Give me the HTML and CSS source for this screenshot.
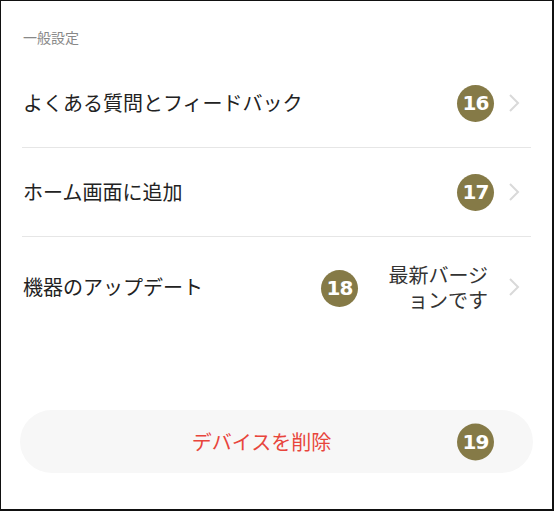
FILE: index.html
```html
<!DOCTYPE html>
<html lang="ja">
<head>
<meta charset="utf-8">
<link rel="stylesheet" href="styles.css">
</head>
<body>
<div class="frame">
  <div class="section-title">一般設定</div>
  <div class="list">
    <div class="row">
      <span class="label">よくある質問とフィードバック</span>
      <span class="badge">16</span>
      <svg class="chev" viewBox="0 0 12 20"><path d="M2 2 L10 10 L2 18" fill="none" stroke="#d9d9d9" stroke-width="2"/></svg>
    </div>
    <div class="row">
      <span class="label">ホーム画面に追加</span>
      <span class="badge">17</span>
      <svg class="chev" viewBox="0 0 12 20"><path d="M2 2 L10 10 L2 18" fill="none" stroke="#d9d9d9" stroke-width="2"/></svg>
    </div>
    <div class="row">
      <span class="label">機器のアップデート</span>
      <span class="badge badge-mid">18</span>
      <span class="value">最新バージョンです</span>
      <svg class="chev" viewBox="0 0 12 20"><path d="M2 2 L10 10 L2 18" fill="none" stroke="#d9d9d9" stroke-width="2"/></svg>
    </div>
  </div>
  <div class="danger">
    <span class="danger-text">デバイスを削除</span>
    <span class="badge badge-abs">19</span>
  </div>
</div>
</body>
</html>
```
FILE: styles.css
```css
html, body {
  margin: 0;
  padding: 0;
  background: #fff;
}
.frame {
  box-sizing: border-box;
  width: 554px;
  height: 511px;
  border-style: solid;
  border-color: #111;
  border-width: 1px 2px 2px 1px;
  padding: 26px 21px 0 21px;
  font-family: "Noto Sans CJK JP", "Noto Sans", sans-serif;
  color: #222;
}
.section-title {
  font-size: 14px;
  line-height: 20px;
  color: #888;
  margin-left: 1px;
  margin-bottom: 12px;
}
.row {
  display: flex;
  align-items: center;
  min-height: 89px;
  box-sizing: border-box;
  border-bottom: 1px solid #e6e6e6;
  padding: 0 0 0 1px;
}
.row:last-child {
  border-bottom: none;
  min-height: 100px;
}
.label {
  flex: 1;
  font-size: 20px;
  line-height: 28px;
  color: #222;
}
.badge {
  display: inline-flex;
  align-items: center;
  justify-content: center;
  width: 37px;
  height: 37px;
  border-radius: 50%;
  background: #857a47;
  color: #fff;
  font-family: "DejaVu Sans", sans-serif;
  font-weight: bold;
  font-size: 20px;
  letter-spacing: -1px;
}
.badge-mid {
  margin-right: 20px;
  margin-top: 2px;
}
.value {
  width: 110px;
  text-align: right;
  font-size: 20px;
  line-height: 25px;
  color: #333;
}
.chev {
  width: 12px;
  height: 20px;
  margin-left: 14px;
  margin-right: 11px;
  flex: none;
}
.value + .chev {
  margin-left: 20px;
}
.danger {
  position: relative;
  margin: 73px -2px 0 -2px;
  height: 63px;
  border-radius: 32px;
  background: #f7f7f7;
  display: flex;
  align-items: center;
  justify-content: center;
  padding-right: 30px;
}
.danger-text {
  font-size: 20px;
  color: #e8453c;
}
.badge-abs {
  position: absolute;
  right: 39px;
  top: 50%;
  transform: translateY(-50%);
}
```
